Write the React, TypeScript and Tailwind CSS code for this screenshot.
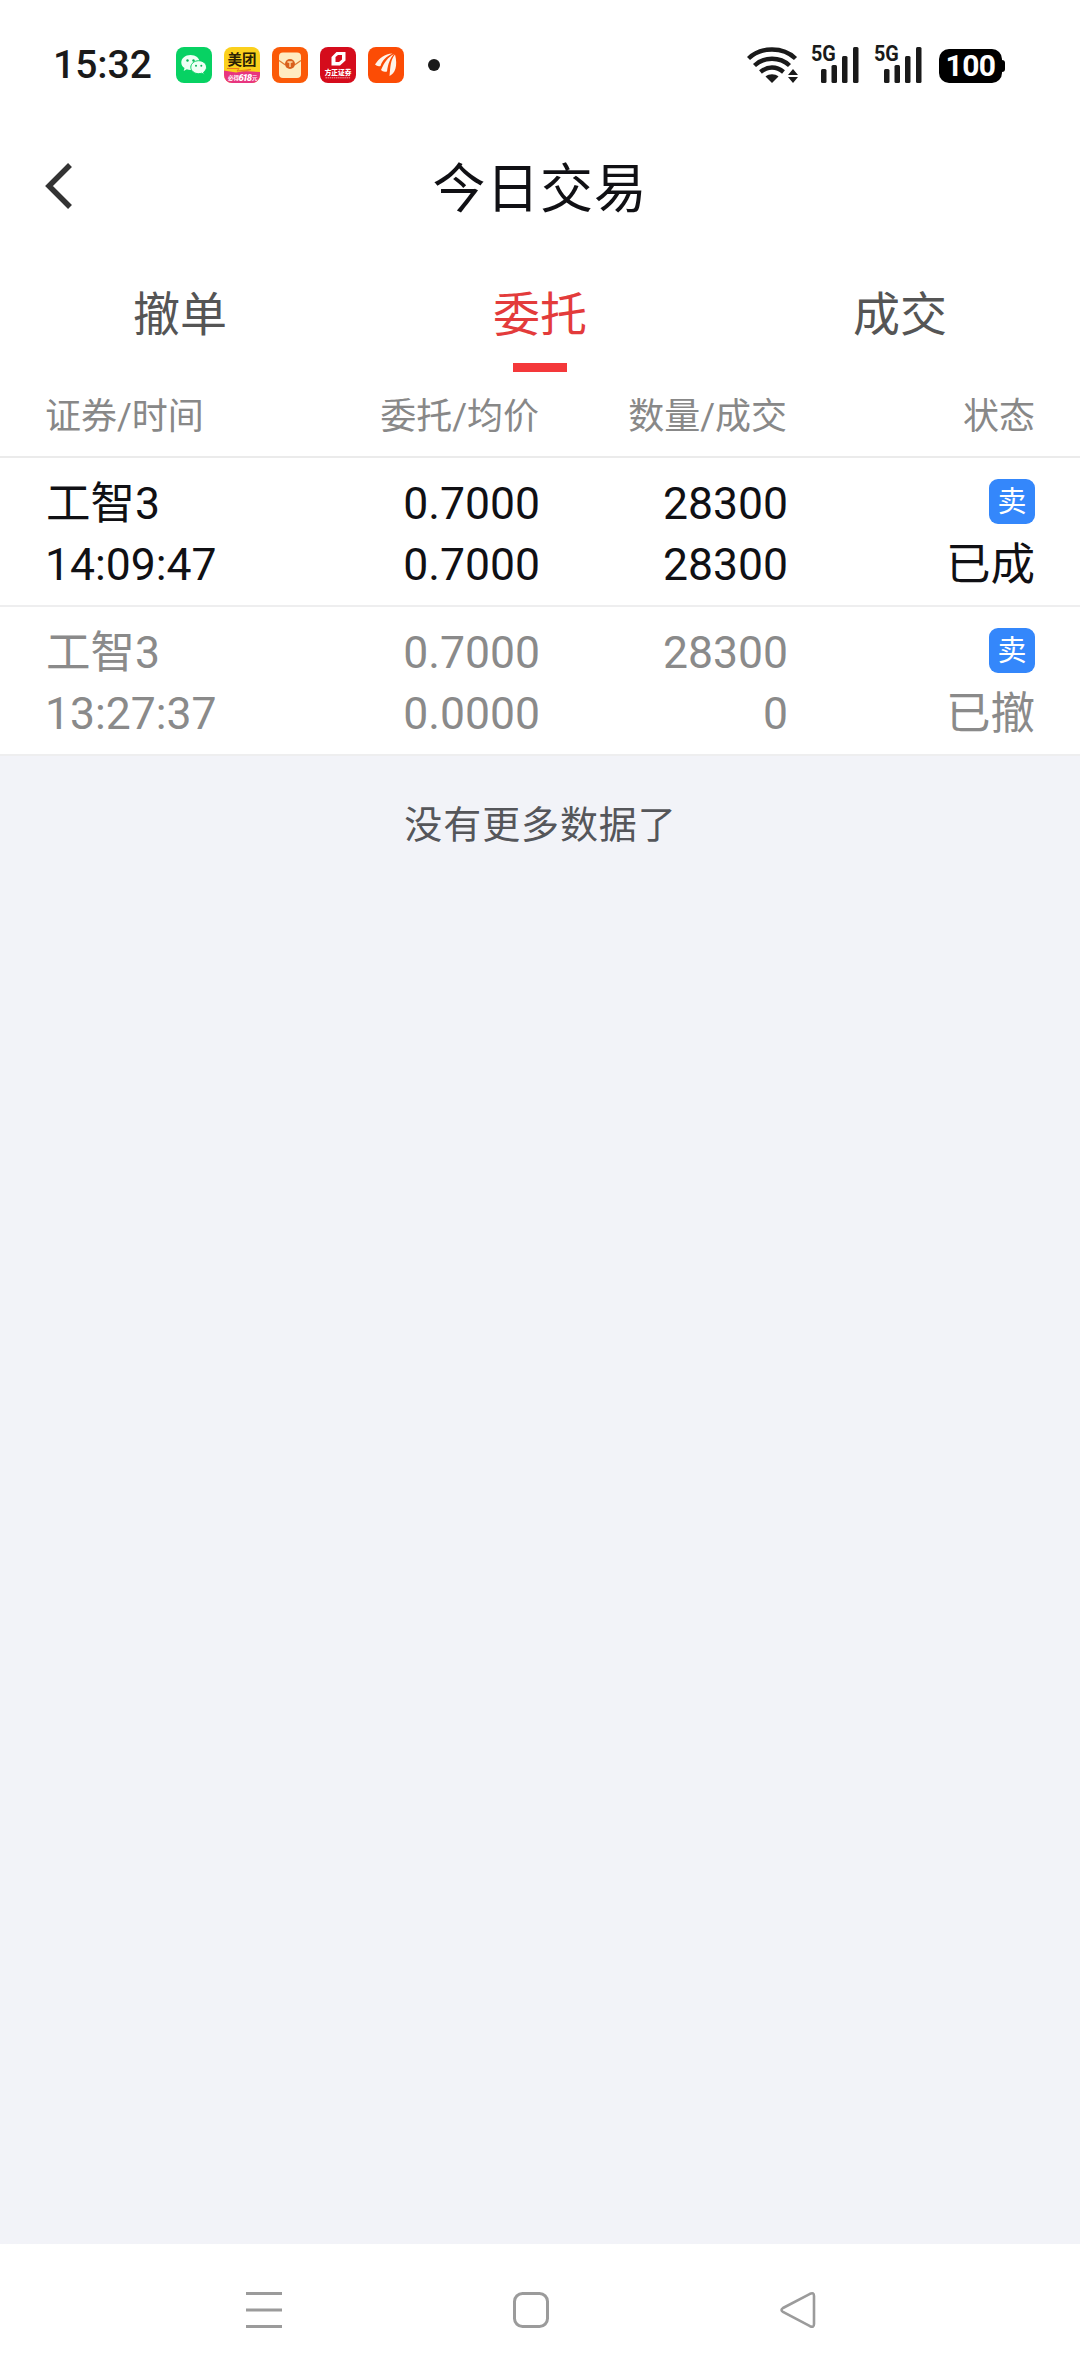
type Order = {
  name: string;
  time: string;
  price: string;
  avgPrice: string;
  amount: string;
  dealt: string;
  status: string;
  done: boolean;
};

const orders: Order[] = [
  {
    name: "工智3",
    time: "14:09:47",
    price: "0.7000",
    avgPrice: "0.7000",
    amount: "28300",
    dealt: "28300",
    status: "已成",
    done: true,
  },
  {
    name: "工智3",
    time: "13:27:37",
    price: "0.7000",
    avgPrice: "0.0000",
    amount: "28300",
    dealt: "0",
    status: "已撤",
    done: false,
  },
];

const tabs = ["撤单", "委托", "成交"];

const WechatIcon = () => (
  <svg width="36" height="36" viewBox="0 0 36 36">
    <rect width="36" height="36" rx="8" fill="#07d263" />
    <path
      d="M14.5 8C9.3 8 5.3 11.3 5.3 15.4c0 2.3 1.2 4.3 3.2 5.7l-.8 2.8 3.1-1.6c1.1.4 2.4.6 3.7.6 5.1 0 9.2-3.3 9.2-7.5S19.7 8 14.5 8z"
      fill="#effff5"
    />
    <path
      d="M22.7 13.7c-4.4 0-7.9 2.9-7.9 6.5s3.5 6.5 7.9 6.5c1 0 2-.2 2.9-.5l2.7 1.4-.7-2.4c1.8-1.2 2.9-3 2.9-5 0-3.6-3.4-6.5-7.8-6.5z"
      fill="#effff5"
      stroke="#07d263"
      strokeWidth="1"
    />
    <circle cx="11.5" cy="13.5" r="1.2" fill="#07b556" />
    <circle cx="17.5" cy="13.5" r="1.2" fill="#07b556" />
    <circle cx="20" cy="18.7" r="1" fill="#07b556" />
    <circle cx="25.3" cy="18.7" r="1" fill="#07b556" />
  </svg>
);

const MeituanIcon = () => (
  <svg width="36" height="36" viewBox="0 0 36 36" className="rounded-[8px]">
    <rect width="36" height="36" fill="#fbd01c" />
    <path d="M0 23.5 12 25.5l8-1.5 16 1v11H0z" fill="#e8357f" />
    <path d="M3 21.5h12l-2 2.5 14-1.5-8 2" stroke="#ee7a20" strokeWidth="1" fill="none" />
    <text x="18" y="17.5" textAnchor="middle" fontSize="14.5" fontWeight="700" fill="#2a2005">
      美团
    </text>
    <text x="4" y="33" fontSize="5.5" fontWeight="700" fill="#fff">
      必得
    </text>
    <text x="14.5" y="33.5" fontSize="9.5" fontWeight="900" fontStyle="italic" fill="#fff" textLength="13.5">
      618
    </text>
    <text x="28" y="33" fontSize="5.5" fontWeight="700" fill="#fff">
      元
    </text>
  </svg>
);

const EnvelopeIcon = () => (
  <svg width="36" height="36" viewBox="0 0 36 36">
    <rect width="36" height="36" rx="8" fill="#fb5a08" />
    <rect x="7" y="5.5" width="22" height="25.5" rx="4" fill="#ffecc0" />
    <path d="M7 13.5 13.5 18M29 13.5 22.5 18" stroke="#e07a30" strokeWidth="1.3" fill="none" />
    <circle cx="18" cy="17" r="5" fill="#d9601c" />
    <path d="M15.5 15h5M18 15v5" stroke="#ffd9a0" strokeWidth="1.4" />
  </svg>
);

const FounderIcon = () => (
  <svg width="36" height="36" viewBox="0 0 36 36">
    <rect width="36" height="36" rx="8" fill="#d50c1c" />
    <path
      fillRule="evenodd"
      d="M16.5 5h9v8.5L20 18.5h-8.5V10zM15.5 10v5h3.5l3-2.5V8h-4z"
      fill="#fff"
    />
    <text x="18" y="28" textAnchor="middle" fontSize="6.7" fontWeight="900" fill="#fff">
      方正证券
    </text>
    <path d="M5.5 30.8h25" stroke="#f2a0a5" strokeWidth="1" strokeDasharray="1.5 .6" />
  </svg>
);

const EastmoneyIcon = () => (
  <svg width="36" height="36" viewBox="0 0 36 36">
    <rect width="36" height="36" rx="8" fill="#fc4c05" />
    <path d="M24.5 6.5C16.5 7 11.5 11 7 17.5q2.5 2.5 5.5 1.5C14.5 13 18 9.5 24.5 6.5z" fill="#fff3e8" />
    <path d="M26 7C20 10 16.5 15 13 23q2 2.5 6 1.5C20 17 22 11.5 26 7z" fill="#fff3e8" />
    <path d="M27 7.5C22.5 13 22.5 19 21.5 29c5.5-2.5 8.5-10 5.5-21.5z" fill="#fff3e8" />
  </svg>
);

const WifiIcon = () => (
  <svg width="52" height="38" viewBox="0 0 52 38" fill="none" stroke="#1a1a1a" strokeWidth="4.4">
    <path d="M1.5 12.5C14 .5 36 .5 48.5 12.5" />
    <path d="M7.5 19.5C17 10.5 33 10.5 42.5 19.5" />
    <path d="M13.5 26c7-6 16-6 23 0" />
    <path d="M25 37 18.5 30.5c3.5-3 9.500-3 13 0z" fill="#1a1a1a" stroke="none" />
    <path d="M46 23l5 6H41zM46 37l5-6H41z" fill="#1a1a1a" stroke="none" />
  </svg>
);

const SignalIcon = () => (
  <span className="relative h-[38px] w-[48px]">
    <span className="absolute -top-[4px] left-0 origin-left scale-x-[0.9] text-[22px] font-bold leading-[24px] text-[#1a1a1a]">
      5G
    </span>
    <svg width="48" height="38" viewBox="0 0 48 38" fill="#1a1a1a">
      <rect x="10" y="23" width="5.5" height="14" rx="1.5" />
      <rect x="20.5" y="19" width="5.5" height="18" rx="1.5" />
      <rect x="31" y="10" width="5.5" height="27" rx="1.5" />
      <rect x="42" y="1" width="5.5" height="36" rx="1.5" />
    </svg>
  </span>
);

const StatusBar = () => (
  <div className="flex h-[130px] items-center justify-between pl-[53px] pr-[75px]">
    <div className="flex items-center">
      <span className="w-[123px] text-[39px] font-medium leading-none text-[#1a1a1a]">15:32</span>
      <div className="flex items-center gap-3">
        <WechatIcon />
        <MeituanIcon />
        <EnvelopeIcon />
        <FounderIcon />
        <EastmoneyIcon />
      </div>
      <span className="ml-6 size-3 rounded-full bg-[#1a1a1a]" />
    </div>
    <div className="flex items-center">
      <WifiIcon />
      <span className="ml-[12px] flex gap-[15px]">
        <SignalIcon />
        <SignalIcon />
      </span>
      <div className="ml-[17px] mt-[2px] flex items-center">
        <span className="flex h-[34px] w-[63px] items-center justify-center rounded-[10px] bg-black text-[30px] font-bold leading-none tracking-[-0.5px] text-white">
          100
        </span>
        <span className="h-3 w-[3px] rounded-r-[3px] bg-black" />
      </div>
    </div>
  </div>
);

const OrderRow = ({ order }: { order: Order }) => (
  <div
    className={`flex h-[149px] flex-col border-b-2 border-[#eeeeef] px-[45px] pt-[16px] text-[44.5px] leading-[61px] ${
      order.done ? "text-[#101014]" : "text-[#8a8a8a]"
    }`}
  >
    <div className="flex">
      <span className="w-[247px] pl-px">{order.name}</span>
      <span className="w-[248px] text-right">{order.price}</span>
      <span className="w-[248px] text-right">{order.amount}</span>
      <span className="flex flex-1 items-start justify-end pt-[5px]">
        <span className="flex h-[45px] w-[46px] items-center justify-center rounded-[9px] bg-[#3487fb] pt-px text-[29px] leading-none text-white">
          卖
        </span>
      </span>
    </div>
    <div className="flex">
      <span className="w-[247px]">{order.time}</span>
      <span className="w-[248px] text-right">{order.avgPrice}</span>
      <span className="w-[248px] text-right">{order.dealt}</span>
      <span className="flex-1 text-right">{order.status}</span>
    </div>
  </div>
);

const App = () => {
  return (
    <div className="flex h-[2376px] w-[1080px] flex-col overflow-hidden bg-white font-[Roboto,'Noto_Sans_CJK_SC',sans-serif]">
      <StatusBar />

      <header className="flex h-[116px] items-center px-[44px]">
        <svg width="30" height="48" viewBox="0 0 30 48" fill="none" stroke="#333" strokeWidth="5.5" className="mb-1">
          <path d="M26 3 5 24l21 21" />
        </svg>
        <h1 className="mr-[30px] flex-1 pt-[5px] text-center text-[53px] leading-none tracking-[0.7px] text-[#101014]">
          今日交易
        </h1>
      </header>

      <nav className="flex h-[126px]">
        {tabs.map((tab) => (
          <button
            key={tab}
            className={`flex flex-1 flex-col items-center pt-[39px] text-[47px] leading-[60px] ${
              tab === "委托" ? "text-[#e33b3b]" : "text-[#555555]"
            }`}
          >
            {tab}
            {tab === "委托" && <span className="mt-[18px] h-[9px] w-[54px] bg-[#f4383a]" />}
          </button>
        ))}
      </nav>

      <div className="flex h-[86px] items-center border-b-2 border-[#ebebeb] px-[45px] pt-[5px] text-[36px] text-[#888888]">
        <span className="w-[247px]">证券/时间</span>
        <span className="w-[247px] text-right">委托/均价</span>
        <span className="w-[248px] text-right">数量/成交</span>
        <span className="flex-1 text-right">状态</span>
      </div>

      {orders.map((order) => (
        <OrderRow key={order.time} order={order} />
      ))}

      <main className="flex-1 bg-[#f2f3f8] pl-px pt-[42px] text-center text-[38px] leading-[54px] tracking-[0.9px] text-[#55565a]">
        没有更多数据了
      </main>

      <footer className="flex h-[132px] items-center justify-between pl-[245px] pr-[263px]">
        <svg width="38" height="38" viewBox="0 0 38 38" stroke="#9b9b9b" strokeWidth="3">
          <path d="M1 2.5h36M1 19h36M1 35.5h36" />
        </svg>
        <svg width="38" height="38" viewBox="0 0 38 38" fill="none" stroke="#9b9b9b" strokeWidth="3">
          <rect x="2.5" y="2.5" width="33" height="33" rx="8" />
        </svg>
        <svg width="38" height="38" viewBox="0 0 38 38" fill="none" stroke="#9b9b9b" strokeWidth="2.6">
          <path d="M4 17 31 2.8Q35 1 35 5v28q0 4-4 2.2L4 21q-3-2 0-4z" />
        </svg>
      </footer>
    </div>
  );
};

export default App;
